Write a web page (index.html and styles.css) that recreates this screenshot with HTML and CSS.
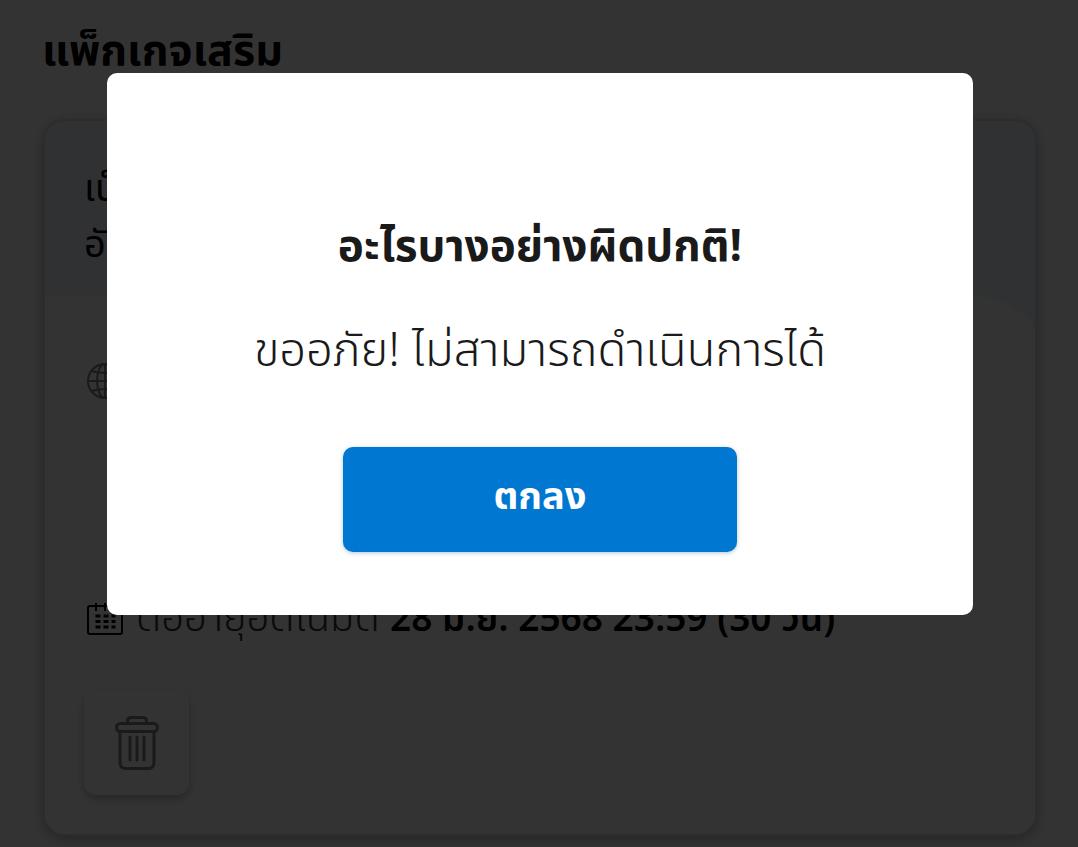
FILE: index.html
```html
<!DOCTYPE html>
<html lang="th">
<head>
<meta charset="utf-8">
<meta name="viewport" content="width=device-width, initial-scale=1">
<title>แพ็กเกจเสริม</title>
<link rel="stylesheet" href="styles.css">
</head>
<body>
<main class="page">
  <h1 class="page-title">แพ็กเกจเสริม</h1>
  <article class="card">
    <header class="card-head">
      <h2 class="card-title">เน็ต<br>อัตโนมัติ</h2>
    </header>
    <div class="card-body">
      <svg class="icon icon-globe" viewBox="0 0 36 36" aria-hidden="true">
        <circle cx="18" cy="18" r="17"/>
        <ellipse cx="18" cy="18" rx="8" ry="17"/>
        <path d="M18 1v34M1 18h34M5 8q13 4 26 0M5 28q13-4 26 0"/>
      </svg>
      <p class="renewal">
        <svg class="icon icon-calendar" viewBox="0 0 36 36" aria-hidden="true">
          <rect x="1" y="4" width="34" height="28" rx="2"/>
          <path d="M9 1v8M18 1v8M27 1v8"/>
          <path class="days" d="M8.500 14h20M8.500 19.500h20M8.500 25h20"/>
        </svg>
        <span>ต่ออายุอัตโนมัติ <strong>28 มิ.ย. 2568 23:59 (30 วัน)</strong></span>
      </p>
      <button class="delete-button" type="button" aria-label="ลบ">
        <svg class="icon icon-trash" viewBox="0 0 44 54" aria-hidden="true">
          <path d="M12.500 7V5q0-3.500 4-3.500h11q4 0 4 3.500v2"/>
          <rect x="1.500" y="7.500" width="41" height="8" rx="4"/>
          <path d="M5 15.500v31q0 6 6 6h22q6 0 6-6v-31"/>
          <path class="slats" d="M15 21v23M22 21v23M29 21v23"/>
        </svg>
      </button>
    </div>
  </article>
</main>
<div class="overlay">
  <section class="modal" role="alertdialog" aria-modal="true" aria-labelledby="alert-title" aria-describedby="alert-message">
    <h2 class="modal-title" id="alert-title">อะไรบางอย่างผิดปกติ!</h2>
    <p class="modal-message" id="alert-message">ขออภัย! ไม่สามารถดำเนินการได้</p>
    <button class="confirm-button" type="button">ตกลง</button>
  </section>
</div>
</body>
</html>
```
FILE: styles.css
```css
* { box-sizing: border-box; }

body {
  margin: 0;
  background: #fff;
  color: #1a1a1a;
  font-family: "Noto Sans Thai", "Noto Sans", sans-serif;
  overflow: hidden;
}

h1, h2, p { margin: 0; }

.page { padding: 22px 43px 22px 42px; }

.page-title {
  color: #000;
  font-size: 43px;
  line-height: 60px;
}

.card {
  margin: 39px 0 0 3px;
  border-radius: 20px;
  background: #ebf5ff;
  box-shadow: 0 0 0 2px #d9d9d9, 0 3px 12px 2px rgba(0, 0, 0, .3);
  overflow: hidden;
}

.card-head { padding: 41px 39px 22px; }

.card-title {
  color: #000;
  font-size: 38px;
  font-weight: 400;
  line-height: 56px;
}

.card-body {
  display: flex;
  flex-direction: column;
  align-items: flex-start;
  margin-right: -12px;
  padding: 67px 39px 39px;
  border-radius: 0 72px 0 0;
  background: #fff;
}

.icon {
  flex: none;
  fill: none;
  stroke: #808080;
  stroke-width: 2;
}

.icon-globe {
  width: 36px;
  height: 36px;
  margin-left: 3px;
}

.icon-calendar {
  width: 36px;
  height: 36px;
  stroke: #000;
}

.days {
  stroke-width: 3;
  stroke-dasharray: 5 3;
}

.renewal {
  display: flex;
  align-items: center;
  gap: 13px;
  margin: 190px 0 0 3px;
  color: #333;
  font-size: 40px;
  font-weight: 350;
  line-height: 60px;
  white-space: nowrap;
}

.renewal strong {
  color: #000;
  font-size: 37px;
  font-weight: 600;
}

.delete-button {
  display: grid;
  place-items: center;
  width: 105px;
  height: 105px;
  margin-top: 40px;
  border: 0;
  border-radius: 12px;
  background: #fff;
  box-shadow: 0 4px 8px rgba(0, 0, 0, .25);
}

.icon-trash {
  width: 44px;
  height: 54px;
  stroke-width: 3;
}

.slats { stroke-linecap: round; }

.overlay {
  position: fixed;
  inset: 0;
  display: flex;
  align-items: flex-start;
  padding: 73px 105px 0 107px;
  background: rgba(0, 0, 0, .8);
}

.modal {
  flex: 1;
  display: flex;
  flex-direction: column;
  align-items: center;
  padding: 143px 40px 63px;
  border-radius: 10px;
  background: #fff;
  text-align: center;
}

.modal-title {
  font-size: 44px;
  line-height: 64px;
}

.modal-message {
  margin-top: 40px;
  font-size: 47px;
  font-weight: 350;
  line-height: 64px;
}

.confirm-button {
  width: 394px;
  height: 105px;
  margin-top: 63px;
  padding: 0 0 4px;
  border: 0;
  border-radius: 10px;
  background: #0078d2;
  box-shadow: 0 1px 4px rgba(0, 60, 110, .3);
  color: #fff;
  font-family: inherit;
  font-size: 38px;
  font-weight: 700;
}
```
